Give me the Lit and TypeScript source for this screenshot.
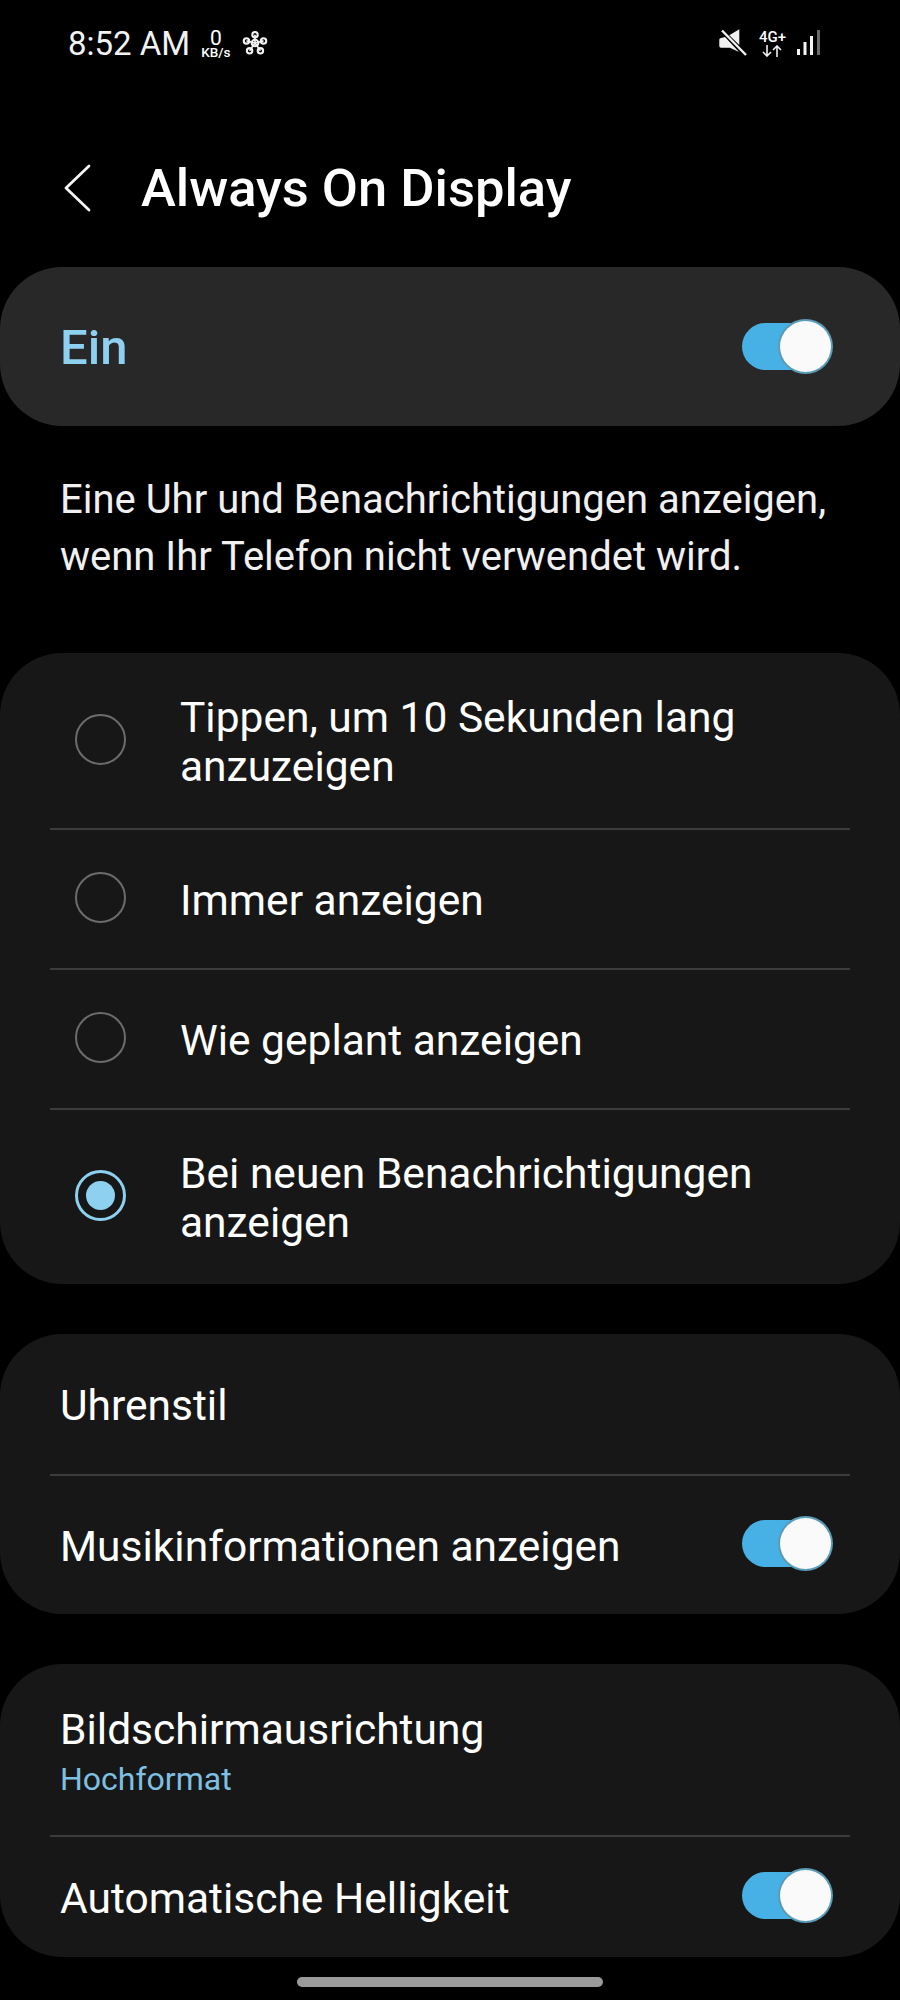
import { LitElement, html, css, svg } from 'lit';
import { customElement } from 'lit/decorators.js';

const PETALS = [
  [12, 4.5],
  [3.8, 10.5],
  [20.2, 10.5],
  [6.8, 20],
  [17.2, 20],
];

@customElement('app-root')
export class AppRoot extends LitElement {
  static styles = css`
    :host {
      display: block;
      width: 900px;
      height: 2000px;
      overflow: hidden;
      background: #000;
      color: #fff;
      font-family: Roboto, 'Liberation Sans', sans-serif;
    }
    .status {
      display: flex;
      align-items: center;
      height: 86px;
      padding: 0 80px 0 68px;
    }
    .time {
      font-size: 33px;
      color: #f2f2f2;
    }
    .speed {
      display: flex;
      flex-direction: column;
      align-items: center;
      margin-left: 11px;
      font-size: 13.5px;
      font-weight: 500;
      line-height: 11px;
    }
    .speed b {
      font-size: 21px;
      font-weight: 400;
      line-height: 18px;
    }
    .flower {
      margin-left: 12px;
    }
    .spacer {
      flex: 1;
    }
    .net {
      display: flex;
      flex-direction: column;
      align-items: center;
      margin: 0 11px 0 12px;
      font-size: 15px;
      font-weight: 500;
      line-height: 15px;
    }
    .header {
      display: flex;
      align-items: center;
      height: 181px;
      padding-left: 63px;
      padding-top: 22px;
      box-sizing: border-box;
    }
    .title {
      margin-left: 48px;
      font-size: 52.5px;
      font-weight: 500;
    }
    .card {
      background: #171717;
      border-radius: 62px;
    }
    .master {
      display: flex;
      align-items: center;
      justify-content: space-between;
      height: 159px;
      padding: 2px 69px 0 60px;
      box-sizing: border-box;
      background: #282828;
      font-size: 49px;
      font-weight: 500;
      color: #8ed0f0;
    }
    .master .toggle {
      margin-top: -3px;
    }
    .desc {
      height: 227px;
      padding: 45px 30px 0 60px;
      box-sizing: border-box;
      font-size: 40px;
      line-height: 57px;
      color: #f0f0f0;
    }
    .gap {
      margin-top: 50px;
    }
    .row {
      display: flex;
      align-items: center;
      justify-content: space-between;
      padding: 2px 69px 0 60px;
      box-sizing: border-box;
      font-size: 42.5px;
      line-height: 49px;
    }
    .row.radio {
      justify-content: flex-start;
      gap: 54px;
      padding-left: 75px;
    }
    .line {
      height: 2px;
      margin: 0 50px;
      background: #3c3c3c;
    }
    .ring {
      flex: none;
      display: flex;
      align-items: center;
      justify-content: center;
      width: 51px;
      height: 51px;
      box-sizing: border-box;
      border: 2.5px solid #6c6c6c;
      border-radius: 50%;
      margin-top: -5px;
    }
    .ring.on {
      border: 3px solid #8ed0f0;
    }
    .ring.on i {
      width: 29px;
      height: 29px;
      border-radius: 50%;
      background: #8ed0f0;
    }
    .sub {
      margin-top: 7px;
      font-size: 32px;
      line-height: 36px;
      color: #7fc0e2;
    }
    .toggle {
      flex: none;
      display: flex;
      align-items: center;
      justify-content: flex-end;
      width: 89px;
      height: 47px;
      margin-top: -5px;
      border-radius: 24px;
      background: #47b1e6;
    }
    .toggle i {
      flex: none;
      width: 51px;
      height: 51px;
      border-radius: 50%;
      background: #fafafa;
      box-shadow: 0 0 0 2px #5a9cb8;
    }
    .pill {
      width: 306px;
      height: 10px;
      margin: 20px auto 0;
      border-radius: 5px;
      background: #9a9a9a;
    }
  `;

  private toggle() {
    return html`<div class="toggle"><i></i></div>`;
  }

  private radio(label: unknown, height: number, on = false) {
    return html`<div class="row radio" style="height:${height}px">
      <div class="ring ${on ? 'on' : ''}">${on ? html`<i></i>` : ''}</div>
      <div>${label}</div>
    </div>`;
  }

  render() {
    return html`
      <div class="status">
        <span class="time">8:52 AM</span>
        <div class="speed"><b>0</b><span>KB/s</span></div>
        <svg class="flower" width="26" height="26" viewBox="0 0 24 25"
          fill="none" stroke="#f2f2f2" stroke-width="2">
          <circle cx="12" cy="12.5" r="3.2"></circle>
          ${PETALS.map(([x, y]) => svg`
            <circle cx=${x} cy=${y} r="2.6"></circle>
            <path d="M12 12.5L${x} ${y}" stroke-width="1.6"></path>`)}
        </svg>
        <div class="spacer"></div>
        <svg width="28" height="28" viewBox="0 0 28 28">
          <path d="M.3 10.5Q.3 9 2 9L6 8 20 23 11 18.7H2Q.3 18.7 .3 17ZM10.3 6.3L20.3 .3V16Z" fill="#f0f0f0"></path>
          <path d="M3 1.5L27 26" stroke="#f0f0f0" stroke-width="2.4"></path>
        </svg>
        <div class="net">
          <span>4G+</span>
          <svg width="20" height="12" viewBox="0 0 20 12" fill="none"
            stroke="#f0f0f0" stroke-width="1.6">
            <path d="M5 0V11M1 7L5 11 9 7M15 12V1M11 5L15 1 19 5"></path>
          </svg>
        </div>
        <svg width="23" height="26" viewBox="0 0 23 26">
          <rect x="0" y="19" width="3" height="6" fill="#f4f4f4"></rect>
          <rect x="6.5" y="12" width="3" height="13" fill="#f4f4f4"></rect>
          <rect x="13" y="6" width="3" height="19" fill="#f4f4f4"></rect>
          <rect x="20" y="0" width="3" height="25" fill="#6a6a6a"></rect>
        </svg>
      </div>

      <div class="header">
        <svg width="30" height="48" viewBox="0 0 30 48" fill="none"
          stroke="#f4f4f4" stroke-width="2.8" stroke-linecap="round" stroke-linejoin="round">
          <path d="M26 2L3 24 26 46"></path>
        </svg>
        <div class="title">Always On Display</div>
      </div>

      <div class="card master">
        <span>Ein</span>
        ${this.toggle()}
      </div>

      <div class="desc">
        Eine Uhr und Benachrichtigungen anzeigen,<br />
        wenn Ihr Telefon nicht verwendet wird.
      </div>

      <div class="card">
        ${this.radio(html`Tippen, um 10 Sekunden lang<br />anzuzeigen`, 175)}
        <div class="line"></div>
        ${this.radio('Immer anzeigen', 138)}
        <div class="line"></div>
        ${this.radio('Wie geplant anzeigen', 138)}
        <div class="line"></div>
        ${this.radio(html`Bei neuen Benachrichtigungen<br />anzeigen`, 174, true)}
      </div>

      <div class="card gap">
        <div class="row" style="height:140px">Uhrenstil</div>
        <div class="line"></div>
        <div class="row" style="height:138px">
          <span>Musikinformationen anzeigen</span>
          ${this.toggle()}
        </div>
      </div>

      <div class="card gap">
        <div class="row" style="height:171px">
          <div>
            <div>Bildschirmausrichtung</div>
            <div class="sub">Hochformat</div>
          </div>
        </div>
        <div class="line"></div>
        <div class="row" style="height:120px">
          <span>Automatische Helligkeit</span>
          ${this.toggle()}
        </div>
      </div>

      <div class="pill"></div>
    `;
  }
}
